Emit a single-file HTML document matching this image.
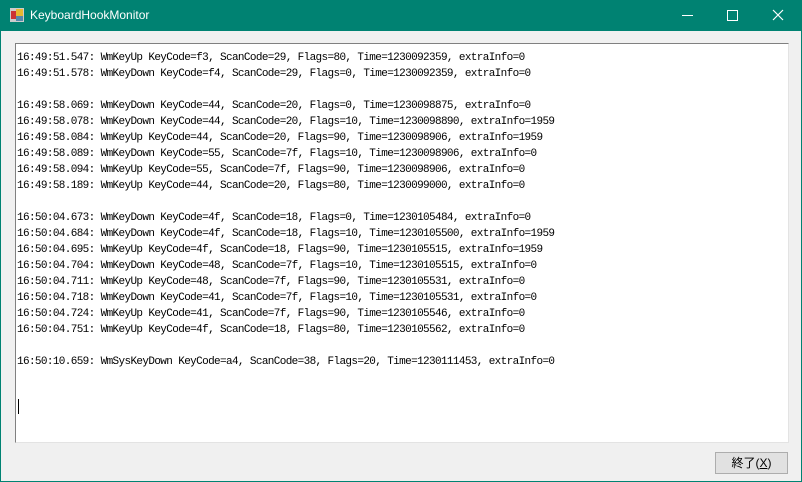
<!DOCTYPE html>
<html><head><style>
body{margin:0;width:802px;height:482px;overflow:hidden;background:#008272;font-family:"Liberation Sans",sans-serif}
#win{position:absolute;left:1px;top:31px;width:800px;height:450px;background:#f0f0f0}
#title{position:absolute;left:0;top:0;width:802px;height:31px;color:#fff;font-size:12px}
#title .t{position:absolute;left:30px;top:8px}
#tb{position:absolute;left:14px;top:12px;width:772px;height:398px;background:#fff;border-top:1px solid #808080;border-left:1px solid #808080;border-right:1px solid #e3e3e3;border-bottom:1px solid #e3e3e3}
pre{margin:0;position:absolute;left:1px;top:6px;font-family:"Liberation Mono",monospace;font-size:11px;line-height:16px;color:#000;letter-spacing:-0.63px}
#btn{position:absolute;left:714px;top:421px;width:71px;height:20px;background:#e1e1e1;border:1px solid #adadad;font-family:"Liberation Sans","Noto Sans CJK JP",sans-serif;font-size:12px;text-align:center;line-height:20px}
.cur{position:absolute;left:2px;top:355px;width:1px;height:15px;background:#000}
</style></head><body>
<div id="title">
<svg style="position:absolute;left:10px;top:8px" width="14" height="14"><rect x="0" y="0" width="14" height="14" fill="#ccc"/><rect x="1" y="3" width="5" height="8" fill="#c33"/><rect x="6" y="1" width="7" height="7" fill="#e8b830"/><rect x="6" y="8" width="7" height="5" fill="#58a"/></svg>
<span class="t">KeyboardHookMonitor</span>
<div style="position:absolute;left:682px;top:15px;width:11px;height:1px;background:#fff"></div>
<div style="position:absolute;left:727px;top:10px;width:9px;height:9px;border:1px solid #fff"></div>
<svg style="position:absolute;left:772px;top:9px" width="12" height="12"><path d="M1 1L11 11M11 1L1 11" stroke="#fff" stroke-width="1.2"/></svg>
</div>
<div id="win">
<div id="tb"><pre>16:49:51.547: WmKeyUp KeyCode=f3, ScanCode=29, Flags=80, Time=1230092359, extraInfo=0
16:49:51.578: WmKeyDown KeyCode=f4, ScanCode=29, Flags=0, Time=1230092359, extraInfo=0

16:49:58.069: WmKeyDown KeyCode=44, ScanCode=20, Flags=0, Time=1230098875, extraInfo=0
16:49:58.078: WmKeyDown KeyCode=44, ScanCode=20, Flags=10, Time=1230098890, extraInfo=1959
16:49:58.084: WmKeyUp KeyCode=44, ScanCode=20, Flags=90, Time=1230098906, extraInfo=1959
16:49:58.089: WmKeyDown KeyCode=55, ScanCode=7f, Flags=10, Time=1230098906, extraInfo=0
16:49:58.094: WmKeyUp KeyCode=55, ScanCode=7f, Flags=90, Time=1230098906, extraInfo=0
16:49:58.189: WmKeyUp KeyCode=44, ScanCode=20, Flags=80, Time=1230099000, extraInfo=0

16:50:04.673: WmKeyDown KeyCode=4f, ScanCode=18, Flags=0, Time=1230105484, extraInfo=0
16:50:04.684: WmKeyDown KeyCode=4f, ScanCode=18, Flags=10, Time=1230105500, extraInfo=1959
16:50:04.695: WmKeyUp KeyCode=4f, ScanCode=18, Flags=90, Time=1230105515, extraInfo=1959
16:50:04.704: WmKeyDown KeyCode=48, ScanCode=7f, Flags=10, Time=1230105515, extraInfo=0
16:50:04.711: WmKeyUp KeyCode=48, ScanCode=7f, Flags=90, Time=1230105531, extraInfo=0
16:50:04.718: WmKeyDown KeyCode=41, ScanCode=7f, Flags=10, Time=1230105531, extraInfo=0
16:50:04.724: WmKeyUp KeyCode=41, ScanCode=7f, Flags=90, Time=1230105546, extraInfo=0
16:50:04.751: WmKeyUp KeyCode=4f, ScanCode=18, Flags=80, Time=1230105562, extraInfo=0

16:50:10.659: WmSysKeyDown KeyCode=a4, ScanCode=38, Flags=20, Time=1230111453, extraInfo=0</pre><div class="cur"></div></div>
<div id="btn">終了(<u>X</u>)</div>
</div>
</body></html>
